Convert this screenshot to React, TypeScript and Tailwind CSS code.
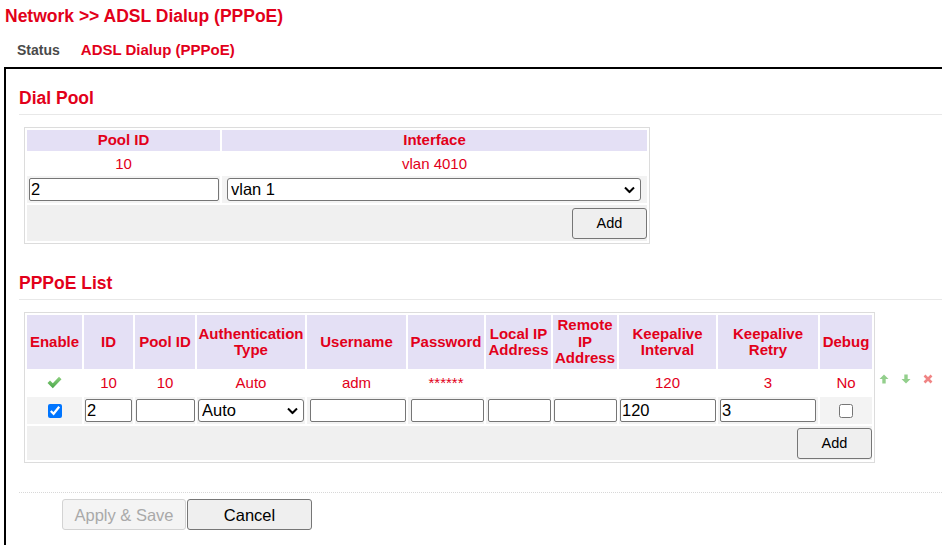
import { useState } from "react";

const red = "text-[#e2001a]";

const ChevronIcon = () => (
  <svg
    className="pointer-events-none absolute right-[6px] top-1/2 -translate-y-1/2"
    width="11"
    height="7"
    viewBox="0 0 11 7"
  >
    <polyline points="1,1 5.5,5.5 10,1" fill="none" stroke="#000" strokeWidth="2" />
  </svg>
);

const GreenCheck = () => (
  <svg width="15" height="13" viewBox="0 0 15 13">
    <defs>
      <linearGradient id="chk" x1="0" y1="0" x2="0" y2="1">
        <stop offset="0" stopColor="#8ccf7e" />
        <stop offset="1" stopColor="#4aa84a" />
      </linearGradient>
    </defs>
    <path d="M0.5 7 L3 4.5 L5.8 7.3 L12 0.8 L14.5 3.2 L5.8 12.2 Z" fill="url(#chk)" />
  </svg>
);

const ArrowUp = () => (
  <svg width="10" height="10" viewBox="0 0 10 10">
    <path d="M5 0.5 L9.5 5 L6.7 5 L6.7 9.5 L3.3 9.5 L3.3 5 L0.5 5 Z" fill="#93cf8c" />
  </svg>
);

const ArrowDown = () => (
  <svg width="10" height="10" viewBox="0 0 10 10">
    <path d="M5 9.5 L9.5 5 L6.7 5 L6.7 0.5 L3.3 0.5 L3.3 5 L0.5 5 Z" fill="#93cf8c" />
  </svg>
);

const CrossIcon = () => (
  <svg width="10" height="10" viewBox="0 0 10 10">
    <path d="M1.5 1.5 L8.5 8.5 M8.5 1.5 L1.5 8.5" stroke="#f08484" strokeWidth="2.6" />
  </svg>
);

const TextInput = ({ value, className = "" }: { value?: string; className?: string }) => {
  const [v, setV] = useState(value ?? "");
  return (
    <input
      value={v}
      onChange={(e) => setV(e.target.value)}
      className={`h-[23px] border border-[#767676] rounded-[2px] bg-white px-[1px] text-[16.5px] leading-[21px] text-black outline-none ${className}`}
    />
  );
};

const SelectBox = ({ options, className = "" }: { options: string[]; className?: string }) => (
  <div className={`relative ${className}`}>
    <select className="h-[23px] w-full appearance-none border border-[#767676] rounded-[3px] bg-white pl-[3px] text-[16.5px] leading-[21px] text-black outline-none">
      {options.map((o) => (
        <option key={o}>{o}</option>
      ))}
    </select>
    <ChevronIcon />
  </div>
);

const AddButton = () => (
  <button
    type="button"
    className="h-[31px] w-[75px] border border-[#767676] rounded-[3px] bg-[#efefef] text-[14.5px] leading-5 text-black"
  >
    Add
  </button>
);

const th = `bg-[#e4e0f5] ${red} font-bold text-[15px] leading-[16.5px] px-[1px] text-center align-middle`;

const pppoeCols = [
  { label: "Enable", w: "w-[55px]" },
  { label: "ID", w: "w-[49px]" },
  { label: "Pool ID", w: "w-[60px]" },
  { label: "Authentication Type", w: "w-[108px]" },
  { label: "Username", w: "w-[99px]" },
  { label: "Password", w: "w-[76px]" },
  { label: "Local IP Address", w: "w-[65px]" },
  { label: "Remote IP Address", w: "w-[64px]" },
  { label: "Keepalive Interval", w: "w-[97px]" },
  { label: "Keepalive Retry", w: "w-[100px]" },
  { label: "Debug", w: "w-[52px]" },
];

export default function App() {
  return (
    <div className="flex h-[545px] flex-col overflow-hidden bg-white leading-[18px] font-['Liberation_Sans',Arial,sans-serif]">
      <div className={`pl-[5px] pt-[6px] text-[17.5px] font-bold leading-5 ${red}`}>
        Network &gt;&gt; ADSL Dialup (PPPoE)
      </div>
      <div className="mt-[14px] flex items-baseline gap-[21px] pl-[17px] font-bold leading-5">
        <span className="text-[14px] text-[#4a4a4a]">Status</span>
        <span className={`text-[15px] ${red}`}>ADSL Dialup (PPPoE)</span>
      </div>

      <div className="ml-[4px] mt-[7px] flex-1 border-l-2 border-t-2 border-black pl-[13px] pt-[18px]">
        {/* Dial Pool */}
        <h2 className={`text-[17.5px] font-bold leading-[22px] ${red}`}>Dial Pool</h2>
        <div className="mt-[5px] h-px bg-[#e8e8e8]" />

        <table className="ml-[5px] mt-[12px] table-fixed border-separate border-spacing-[2px] border border-[#dcdcdc]">
          <thead>
            <tr>
              <th className={`${th} h-[21px] w-[193px]`}>Pool ID</th>
              <th className={`${th} h-[21px] w-[425px]`}>Interface</th>
            </tr>
          </thead>
          <tbody>
            <tr className={`text-[15px] ${red}`}>
              <td className="h-[21px] text-center">10</td>
              <td className="h-[21px] text-center">vlan 4010</td>
            </tr>
            <tr className="bg-[#f3f3f3]">
              <td className="h-[27px] pl-[2px] pr-[1px]">
                <TextInput value="2" className="w-full" />
              </td>
              <td className="h-[27px]">
                <SelectBox options={["vlan 1", "vlan 4010"]} className="ml-[5px] w-[414px]" />
              </td>
            </tr>
            <tr className="bg-[#f0f0f0]">
              <td colSpan={2} className="h-[36px] pr-0 text-right align-middle">
                <AddButton />
              </td>
            </tr>
          </tbody>
        </table>

        {/* PPPoE List */}
        <h2 className={`mt-[28px] text-[17.5px] font-bold leading-[22px] ${red}`}>PPPoE List</h2>
        <div className="mt-[5px] h-px bg-[#e8e8e8]" />

        <div className="ml-[5px] mt-[12px] flex items-start">
          <table className="table-fixed border-separate border-spacing-[2px] border border-[#dcdcdc]">
            <thead>
              <tr>
                {pppoeCols.map((c) => (
                  <th key={c.label} className={`${th} h-[54px] ${c.w}`}>
                    {c.label}
                  </th>
                ))}
              </tr>
            </thead>
            <tbody>
              <tr className={`text-center text-[15px] ${red}`}>
                <td className="h-[24px] align-middle">
                  <span className="inline-flex pt-[2px]">
                    <GreenCheck />
                  </span>
                </td>
                <td>10</td>
                <td>10</td>
                <td>Auto</td>
                <td>adm</td>
                <td className="align-middle">******</td>
                <td />
                <td />
                <td>120</td>
                <td>3</td>
                <td>No</td>
              </tr>
              <tr className="bg-[#f3f3f3]">
                <td className="h-[27px] text-center">
                  <input type="checkbox" defaultChecked className="h-[14px] w-[14px] align-middle" />
                </td>
                <td className="pl-[1px]">
                  <TextInput value="2" className="w-[47px]" />
                </td>
                <td className="pl-[1px]">
                  <TextInput className="w-[59px]" />
                </td>
                <td className="pl-[1px]">
                  <SelectBox options={["Auto", "PAP", "CHAP"]} className="w-[106px]" />
                </td>
                <td className="pl-[3px]">
                  <TextInput className="w-[96px]" />
                </td>
                <td className="pl-[3px]">
                  <TextInput className="w-[73px]" />
                </td>
                <td className="pl-[2px]">
                  <TextInput className="w-[63px]" />
                </td>
                <td className="pl-[1px]">
                  <TextInput className="w-[63px]" />
                </td>
                <td className="pl-[1px]">
                  <TextInput value="120" className="w-[96px]" />
                </td>
                <td className="pl-[2px]">
                  <TextInput value="3" className="w-[96px]" />
                </td>
                <td className="text-center">
                  <input type="checkbox" className="h-[14px] w-[14px] align-middle" />
                </td>
              </tr>
              <tr className="bg-[#f0f0f0]">
                <td colSpan={11} className="h-[34px] text-right align-middle">
                  <AddButton />
                </td>
              </tr>
            </tbody>
          </table>
          <div className="ml-[4px] mt-[62px] flex items-center gap-[12px]">
            <ArrowUp />
            <ArrowDown />
            <CrossIcon />
          </div>
        </div>

        <div className="mt-[29px] border-t border-dotted border-[#d8d8d8]" />

        <div className="ml-[43px] mt-[6px] flex gap-px">
          <button
            type="button"
            disabled
            className="h-[31px] w-[124px] border border-[#d3d3d3] rounded-[3px] bg-[#f4f4f4] text-[16.5px] text-[#a9a9a9]"
          >
            Apply &amp; Save
          </button>
          <button
            type="button"
            className="h-[31px] w-[125px] border border-[#767676] rounded-[3px] bg-[#efefef] text-[16.5px] text-black"
          >
            Cancel
          </button>
        </div>
      </div>
    </div>
  );
}
